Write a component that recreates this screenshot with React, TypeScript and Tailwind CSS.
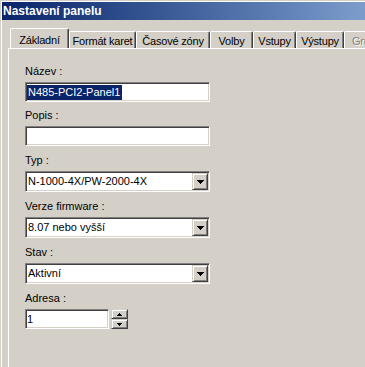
import React from 'react';

const sunken =
  'border border-t-[#808080] border-l-[#808080] border-r-white border-b-white shadow-[inset_1px_1px_0_#404040,inset_-1px_-1px_0_#d4d0c8] p-px';
const raised =
  'border border-t-[#d4d0c8] border-l-[#d4d0c8] border-r-[#404040] border-b-[#404040] shadow-[inset_1px_1px_0_#ffffff,inset_-1px_-1px_0_#808080] bg-[#d4d0c8]';

const ArrowDown: React.FC<{ size?: 'big' | 'small' }> = ({ size = 'big' }) =>
  size === 'big' ? (
    <svg width="7" height="4" shapeRendering="crispEdges">
      <rect x="0" y="0" width="7" height="1" fill="#000" />
      <rect x="1" y="1" width="5" height="1" fill="#000" />
      <rect x="2" y="2" width="3" height="1" fill="#000" />
      <rect x="3" y="3" width="1" height="1" fill="#000" />
    </svg>
  ) : (
    <svg width="5" height="3" shapeRendering="crispEdges">
      <rect x="0" y="0" width="5" height="1" fill="#000" />
      <rect x="1" y="1" width="3" height="1" fill="#000" />
      <rect x="2" y="2" width="1" height="1" fill="#000" />
    </svg>
  );

const ArrowUp: React.FC = () => (
  <svg width="5" height="3" shapeRendering="crispEdges">
    <rect x="2" y="0" width="1" height="1" fill="#000" />
    <rect x="1" y="1" width="3" height="1" fill="#000" />
    <rect x="0" y="2" width="5" height="1" fill="#000" />
  </svg>
);

const tabs = [
  { label: 'Formát karet', w: 'w-[67px]' },
  { label: 'Časové zóny', w: 'w-[74px]' },
  { label: 'Volby', w: 'w-[43px]' },
  { label: 'Vstupy', w: 'w-[43px]' },
  { label: 'Výstupy', w: 'w-[48px]' },
];

const Label: React.FC<{ children: React.ReactNode }> = ({ children }) => (
  <div className="h-[13px] leading-[13px] mb-[4px] text-black">{children}</div>
);

const Select: React.FC<{ value: string }> = ({ value }) => (
  <div className={`w-[185px] h-[21px] bg-white flex ${sunken}`}>
    <div className="flex-1 flex items-center pl-px leading-[13px] whitespace-nowrap overflow-hidden">
      {value}
    </div>
    <div className={`w-[16px] h-full flex items-center justify-center ${raised}`}>
      <ArrowDown />
    </div>
  </div>
);

export default function App() {
  return (
    <div className="w-[365px] h-[367px] bg-[#d4d0c8] overflow-hidden font-['Liberation_Sans',Arial,sans-serif] text-[11px] text-black">
      <div className="ml-px mt-px h-[366px] border-l border-t border-white flex flex-col">
        {/* title bar */}
        <div className="h-[18px] shrink-0 flex items-center pl-px bg-gradient-to-r from-[#0a246a] to-[#7c9dcc] text-white font-bold text-[12px] whitespace-nowrap">
          Nastavení panelu
        </div>

        {/* tab strip */}
        <div className="h-[28px] shrink-0 flex items-end pl-[8px] whitespace-nowrap overflow-hidden tracking-[-0.2px]">
          <div className="relative z-10 -mb-px shrink-0 w-[59px] h-[21px] bg-[#d4d0c8] border-l border-t border-white border-r border-r-[#404040] shadow-[inset_-1px_0_0_#808080] flex justify-center pt-[5px] leading-[13px] rounded-tl-[2px] rounded-tr-[2px]">
            Základní
          </div>
          {tabs.map(t => (
            <div
              key={t.label}
              className={`${t.w} shrink-0 h-[17px] border-l border-t border-white border-r border-r-[#404040] shadow-[inset_-1px_0_0_#808080] flex justify-center pt-[3px] leading-[13px] rounded-tl-[2px] rounded-tr-[2px]`}
            >
              {t.label}
            </div>
          ))}
          <div className="w-[60px] shrink-0 h-[17px] border-l border-t border-white pt-[3px] pl-[7px] leading-[13px] text-[#808080] [text-shadow:1px_1px_0_#ffffff] rounded-tl-[2px]">
            Grupy
          </div>
        </div>

        {/* tab panel */}
        <div className="flex-1 ml-[6px] border-l border-t border-white pl-[16px] pt-[16px] flex flex-col">
          <Label>Název :</Label>
          <div className={`w-[185px] h-[20px] bg-white flex items-center ${sunken}`}>
            <span className="bg-[#0a246a] text-white leading-[15px] pl-px pr-[2px] whitespace-nowrap">
              N485-PCI2-Panel1
            </span>
          </div>

          <div className="mt-[7px]">
            <Label>Popis :</Label>
            <div className={`w-[185px] h-[20px] bg-white ${sunken}`} />
          </div>

          <div className="mt-[8px]">
            <Label>Typ :</Label>
            <Select value="N-1000-4X/PW-2000-4X" />
          </div>

          <div className="mt-[8px]">
            <Label>Verze firmware :</Label>
            <Select value="8.07 nebo vyšší" />
          </div>

          <div className="mt-[8px]">
            <Label>Stav :</Label>
            <Select value="Aktivní" />
          </div>

          <div className="mt-[8px]">
            <Label>Adresa :</Label>
            <div className="flex gap-[2px]">
              <div className={`w-[84px] h-[20px] bg-white flex items-center pl-px ${sunken}`}>1</div>
              <div className="flex flex-col w-[17px] h-[20px]">
                <div className={`h-[10px] flex items-center justify-center ${raised}`}>
                  <ArrowUp />
                </div>
                <div className={`h-[10px] flex items-center justify-center ${raised}`}>
                  <ArrowDown size="small" />
                </div>
              </div>
            </div>
          </div>
        </div>
      </div>
    </div>
  );
}
